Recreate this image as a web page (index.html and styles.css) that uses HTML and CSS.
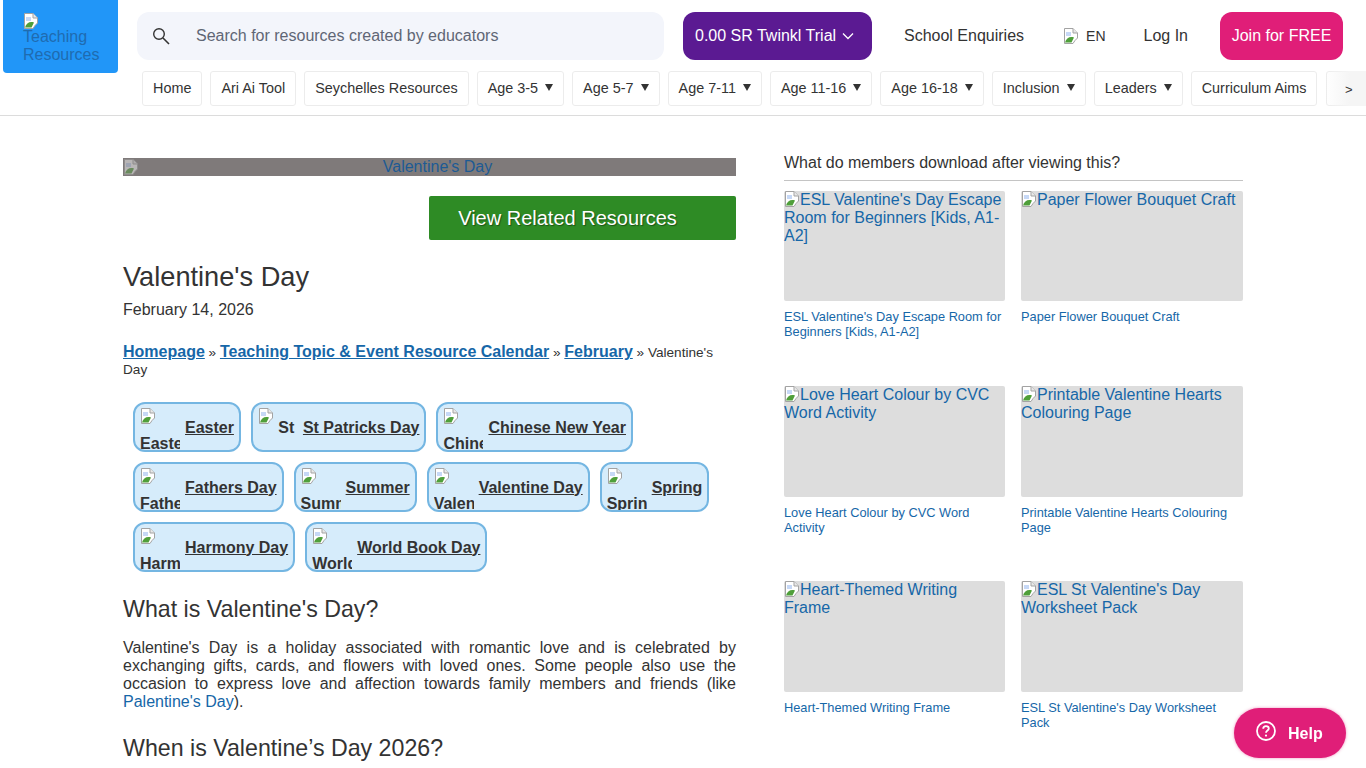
FILE: index.html
```html
<!DOCTYPE html>
<html>

<head>
    <title>Valentine's Day - Teaching Resources</title>
    <meta name="viewport" content="width=device-width, initial-scale=1.0">
    <link rel="stylesheet" href="styles.css">
</head>

<body>
    <!-- Shared picture for every image that failed to load -->
    <svg class="sprite" width="0" height="0">
        <symbol id="broken" viewBox="0 0 16 16">
            <path d="M1.5 .5H10L14.5 5V10L12 12.5L10 15.5H1.5Z" fill="#fff" stroke="#a3a3a3"/>
            <path d="M10 .5V5H14.5" fill="#e8e8e8" stroke="#a3a3a3"/>
            <path d="M3 4H8V8H3Z" fill="#c6d8f6"/>
            <path d="M2 14.5C3 10 7 8 11 9.5L8.5 14.5Z" fill="#4f9f3a"/>
        </symbol>
    </svg>

    <header class="site-header">
        <a class="logo" href="#"><svg class="broken-icon"><use href="#broken"/></svg>Teaching Resources</a>
        <div class="header-main">
            <div class="top-row">
                <form class="search-box">
                    <svg class="search-icon" viewBox="0 0 18 18" width="18" height="18">
                        <circle cx="7" cy="7" r="5.3" fill="none" stroke="#333" stroke-width="1.4"/>
                        <path d="M11 11L17 17" stroke="#333" stroke-width="1.6"/>
                    </svg>
                    <span class="search-text">Search for resources created by educators</span>
                </form>
                <a class="trial-btn" href="#">0.00 SR Twinkl Trial
                    <svg viewBox="0 0 12 8" width="12" height="8"><path d="M1 1.5L6 6.5L11 1.5" fill="none" stroke="#fff" stroke-width="1.3"/></svg>
                </a>
                <a class="top-link enquiries" href="#">School Enquiries</a>
                <span class="lang"><svg class="broken-icon"><use href="#broken"/></svg>EN</span>
                <a class="top-link login" href="#">Log In</a>
                <a class="join-btn" href="#">Join for FREE</a>
            </div>
            <nav class="main-nav">
                <a class="nav-item" href="#">Home</a>
                <a class="nav-item" href="#">Ari Ai Tool</a>
                <a class="nav-item" href="#">Seychelles Resources</a>
                <a class="nav-item has-menu" href="#">Age 3-5</a>
                <a class="nav-item has-menu" href="#">Age 5-7</a>
                <a class="nav-item has-menu" href="#">Age 7-11</a>
                <a class="nav-item has-menu" href="#">Age 11-16</a>
                <a class="nav-item has-menu" href="#">Age 16-18</a>
                <a class="nav-item has-menu" href="#">Inclusion</a>
                <a class="nav-item has-menu" href="#">Leaders</a>
                <a class="nav-item" href="#">Curriculum Aims</a>
                <a class="nav-item stub" href="#"></a>
                <span class="nav-more">&gt;</span>
            </nav>
        </div>
    </header>

    <div class="page">
        <main class="article">
            <a class="hero" href="#"><svg class="broken-icon"><use href="#broken"/></svg><span class="hero-alt">Valentine's Day</span></a>
            <div class="button-group">
                <a class="related-btn" href="#">View Related Resources</a>
            </div>

            <h1>Valentine's Day</h1>
            <p class="date">February 14, 2026</p>

            <p class="crumbs">
                <a href="#">Homepage</a> » <a href="#">Teaching Topic &amp; Event Resource Calendar</a> » <a href="#">February</a> » Valentine's Day
            </p>

            <div class="tags">
                <a class="tag" href="#"><span class="tag-img"><svg class="broken-icon"><use href="#broken"/></svg> Easter</span><span class="tag-name">Easter</span></a>
                <a class="tag" href="#"><span class="tag-img"><svg class="broken-icon"><use href="#broken"/></svg> St</span><span class="tag-name">St Patricks Day</span></a>
                <a class="tag" href="#"><span class="tag-img"><svg class="broken-icon"><use href="#broken"/></svg> Chinese</span><span class="tag-name">Chinese New Year</span></a>
                <a class="tag" href="#"><span class="tag-img"><svg class="broken-icon"><use href="#broken"/></svg> Fathers</span><span class="tag-name">Fathers Day</span></a>
                <a class="tag" href="#"><span class="tag-img"><svg class="broken-icon"><use href="#broken"/></svg> Summer</span><span class="tag-name">Summer</span></a>
                <a class="tag" href="#"><span class="tag-img"><svg class="broken-icon"><use href="#broken"/></svg> Valentine</span><span class="tag-name">Valentine Day</span></a>
                <a class="tag" href="#"><span class="tag-img"><svg class="broken-icon"><use href="#broken"/></svg> Spring</span><span class="tag-name">Spring</span></a>
                <a class="tag" href="#"><span class="tag-img"><svg class="broken-icon"><use href="#broken"/></svg> Harmony</span><span class="tag-name">Harmony Day</span></a>
                <a class="tag" href="#"><span class="tag-img"><svg class="broken-icon"><use href="#broken"/></svg> World</span><span class="tag-name">World Book Day</span></a>
            </div>

            <h2>What is Valentine's Day?</h2>
            <p class="body-text">Valentine's Day is a holiday associated with romantic love and is celebrated by exchanging gifts, cards, and flowers with loved ones. Some people also use the occasion to express love and affection towards family members and friends (like <a href="#">Palentine's Day</a>).</p>

            <h2 class="next-heading">When is Valentine’s Day 2026?</h2>
        </main>

        <aside class="sidebar">
            <h3 class="side-title">What do members download after viewing this?</h3>
            <div class="cards">
                <a class="card" href="#">
                    <span class="card-img"><svg class="broken-icon"><use href="#broken"/></svg>ESL Valentine's Day Escape Room for Beginners [Kids, A1-A2]</span>
                    <span class="card-name">ESL Valentine's Day Escape Room for Beginners [Kids, A1-A2]</span>
                </a>
                <a class="card" href="#">
                    <span class="card-img"><svg class="broken-icon"><use href="#broken"/></svg>Paper Flower Bouquet Craft</span>
                    <span class="card-name">Paper Flower Bouquet Craft</span>
                </a>
                <a class="card" href="#">
                    <span class="card-img"><svg class="broken-icon"><use href="#broken"/></svg>Love Heart Colour by CVC Word Activity</span>
                    <span class="card-name">Love Heart Colour by CVC Word Activity</span>
                </a>
                <a class="card" href="#">
                    <span class="card-img"><svg class="broken-icon"><use href="#broken"/></svg>Printable Valentine Hearts Colouring Page</span>
                    <span class="card-name">Printable Valentine Hearts Colouring Page</span>
                </a>
                <a class="card" href="#">
                    <span class="card-img"><svg class="broken-icon"><use href="#broken"/></svg>Heart-Themed Writing Frame</span>
                    <span class="card-name">Heart-Themed Writing Frame</span>
                </a>
                <a class="card" href="#">
                    <span class="card-img"><svg class="broken-icon"><use href="#broken"/></svg>ESL St Valentine's Day Worksheet Pack</span>
                    <span class="card-name">ESL St Valentine's Day Worksheet Pack</span>
                </a>
            </div>
        </aside>
    </div>

    <a class="help-btn" href="#">
        <svg viewBox="0 0 22 22" width="22" height="22">
            <circle cx="11" cy="11" r="9" fill="none" stroke="#fff" stroke-width="1.8"/>
            <path d="M8.2 8.8C8.2 7 9.5 6.2 11 6.2C12.6 6.2 13.8 7.1 13.8 8.6C13.8 10.6 11 10.6 11 12.8" fill="none" stroke="#fff" stroke-width="1.8"/>
            <circle cx="11" cy="15.6" r="1.1" fill="#fff"/>
        </svg>
        Help
    </a>
</body>
</html>
```

FILE: styles.css
```css
* {
    box-sizing: border-box;
}

html {
    overflow: hidden;
}

body {
    margin: 0;
    height: 768px;
    overflow: hidden;
    background-color: #ffffff;
    color: #333333;
    font-family: "Liberation Sans", Arial, sans-serif;
    font-size: 16px;
}

a {
    color: #1667a8;
    text-decoration: none;
}

.sprite {
    display: block;
}

.broken-icon {
    width: 16px;
    height: 16px;
    vertical-align: baseline;
}

/* Header */
.site-header {
    display: flex;
    height: 116px;
    border-bottom: 1px solid #dcdcdc;
}

.logo {
    flex: none;
    width: 115px;
    height: 73px;
    margin-left: 3px;
    padding: 13px 20px 0;
    background-color: #2196f8;
    border-radius: 0 0 4px 4px;
    color: #1f6bb0;
    line-height: 18px;
}

.logo .broken-icon {
    display: block;
    margin-bottom: -1px;
}

.header-main {
    flex: 1;
    min-width: 0;
    padding-left: 19px;
}

.top-row {
    display: flex;
    align-items: center;
    height: 48px;
    margin-top: 12px;
}

.search-box {
    display: flex;
    align-items: center;
    width: 527px;
    height: 48px;
    padding-left: 15px;
    background-color: #f3f5fb;
    border-radius: 12px;
}

.search-text {
    margin-left: 26px;
    color: #5f6675;
}

.trial-btn {
    display: flex;
    align-items: center;
    gap: 6px;
    width: 189px;
    height: 48px;
    margin-left: 19px;
    padding-left: 12px;
    background-color: #5b1a92;
    border-radius: 12px;
    color: #ffffff;
}

.top-link {
    color: #333333;
}

.enquiries {
    margin-left: 32px;
}

.lang {
    display: flex;
    align-items: center;
    gap: 7px;
    margin-left: 39px;
    font-size: 14px;
}

.login {
    margin-left: 38px;
}

.join-btn {
    display: flex;
    align-items: center;
    justify-content: center;
    width: 123px;
    height: 48px;
    margin-left: 32px;
    background-color: #e01e78;
    border-radius: 12px;
    color: #ffffff;
}

.main-nav {
    position: relative;
    display: flex;
    gap: 8.05px;
    height: 35px;
    margin-top: 11px;
    margin-left: 5px;
    overflow: hidden;
}

.nav-item {
    display: flex;
    flex: none;
    align-items: center;
    height: 35px;
    padding: 0 10px 2px;
    background-color: #ffffff;
    border: 1px solid #ececec;
    border-radius: 3px;
    color: #333333;
    font-size: 14.4px;
}

/* Small solid arrow on items with a dropdown */
.has-menu::after {
    content: "";
    width: 0;
    height: 0;
    margin-left: 7px;
    border-left: 4px solid transparent;
    border-right: 4px solid transparent;
    border-top: 7px solid #333333;
}

.stub {
    width: 40px;
}

/* Fade over the end of the scrolling nav */
.nav-more {
    position: absolute;
    top: 0;
    right: 0;
    width: 41px;
    height: 35px;
    padding: 11px 0 0 20px;
    background: linear-gradient(to right, rgba(245, 245, 245, 0), #f5f5f5 60%);
    font-size: 13px;
}

/* Page columns */
.page {
    display: flex;
    padding: 42px 123px 0;
    gap: 48px;
}

.article {
    width: 613px;
    flex: none;
}

.hero {
    display: block;
    position: relative;
    height: 18px;
    padding-left: 16px;
    background-color: #7f7a7a;
    color: #1d5a94;
    text-align: center;
    line-height: 18px;
}

.hero .broken-icon {
    position: absolute;
    left: 0;
    top: 1px;
    opacity: .45;
}

.button-group {
    margin-top: 20px;
    text-align: right;
}

.related-btn {
    display: inline-block;
    width: 307px;
    height: 44px;
    padding-right: 30px;
    background-color: #2e8b25;
    border-radius: 2px;
    color: #ffffff;
    font-size: 20px;
    line-height: 44px;
    text-align: center;
    text-shadow: 1px 1px 1px rgba(0, 0, 0, .4);
}

h1 {
    margin: 20px 0 0;
    font-size: 27.2px;
    font-weight: normal;
    line-height: 34px;
}

.date {
    margin: 7px 0 0;
    line-height: 18px;
}

.crumbs {
    margin: 25px 0 0;
    font-size: 13.6px;
    line-height: 17px;
}

.crumbs a {
    font-size: 16px;
    font-weight: bold;
    line-height: 1;
    text-decoration: underline;
}

/* Topic pills */
.tags {
    display: flex;
    flex-wrap: wrap;
    gap: 10px;
    margin-top: 24px;
    padding-left: 10px;
}

.tag {
    display: flex;
    align-items: center;
    gap: 5px;
    height: 50px;
    padding: 0 5px;
    background-color: #d6ecfb;
    border: 2px solid #74b6e2;
    border-radius: 12px;
    color: #333333;
    font-weight: bold;
}

.tag-img {
    display: block;
    align-self: flex-start;
    width: 40px;
    height: 43px;
    margin-top: 3px;
    padding-top: 1px;
    overflow: hidden;
    line-height: 16px;
}

.tag-img .broken-icon {
    vertical-align: 9px;
}

.tag-name {
    padding-top: 1px;
    text-decoration: underline;
    white-space: nowrap;
}

h2 {
    margin: 22px 0 0;
    font-size: 23.2px;
    font-weight: normal;
    line-height: 30px;
}

.body-text {
    margin: 15px 0 0;
    line-height: 18px;
    text-align: justify;
}

.next-heading {
    margin-top: 22px;
}

/* Sidebar */
.sidebar {
    width: 459px;
    flex: none;
}

.side-title {
    margin: -4px 0 0;
    padding-bottom: 8px;
    border-bottom: 1px solid #c4c4c4;
    font-size: 16px;
    font-weight: normal;
    line-height: 18px;
}

.cards {
    display: grid;
    grid-template-columns: 221px 222px;
    grid-auto-rows: 195.3px;
    column-gap: 16px;
    margin-top: 9.7px;
}

.card-img {
    display: block;
    height: 110.6px;
    background-color: #dddddd;
    border-radius: 2px;
    line-height: 18px;
}

.card-img .broken-icon {
    margin-bottom: -2px;
}

.card-name {
    display: block;
    margin-top: 8px;
    font-size: 12.8px;
    line-height: 15px;
}

/* Floating help */
.help-btn {
    position: fixed;
    right: 20px;
    bottom: 10px;
    display: flex;
    align-items: center;
    gap: 11px;
    width: 112px;
    height: 50px;
    padding: 2px 0 0 21px;
    background-color: #e01e78;
    border-radius: 25px;
    box-shadow: 0 0 3px rgba(224, 30, 120, .5);
    color: #ffffff;
    font-size: 16px;
    font-weight: bold;
}

.help-btn svg {
    margin-top: -6px;
}
```
